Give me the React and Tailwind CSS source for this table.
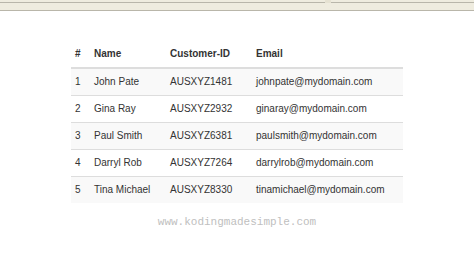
import React from 'react';

const customers = [
  { id: 1, name: 'John Pate', cid: 'AUSXYZ1481', email: 'johnpate@mydomain.com' },
  { id: 2, name: 'Gina Ray', cid: 'AUSXYZ2932', email: 'ginaray@mydomain.com' },
  { id: 3, name: 'Paul Smith', cid: 'AUSXYZ6381', email: 'paulsmith@mydomain.com' },
  { id: 4, name: 'Darryl Rob', cid: 'AUSXYZ7264', email: 'darrylrob@mydomain.com' },
  { id: 5, name: 'Tina Michael', cid: 'AUSXYZ8330', email: 'tinamichael@mydomain.com' },
];

export default function App() {
  return (
    <div className="w-[474px] h-[264px] bg-white font-['Liberation_Sans',Arial,sans-serif] text-[10px] text-[#333]">
      {/* browser chrome strip */}
      <div className="h-[11px] bg-[#efecdf] border-b border-[#b9b6aa] flex items-start">
        <div className="flex-1 h-[3px] border-b border-[#b9b6aa]" />
        <div className="w-[6px] h-[3px] bg-[#e6e2d2]" />
        <div className="w-[143px] h-[3px] border-b border-[#b9b6aa]" />
      </div>

      <div className="pt-[29px] flex justify-center">
        <table className="w-[332px] border-collapse table-fixed">
          <colgroup>
            <col className="w-[18px]" />
            <col className="w-[76px]" />
            <col className="w-[86px]" />
            <col className="w-[152px]" />
          </colgroup>
          <thead>
            <tr className="h-[28px] border-b-2 border-[#dddddd]">
              <th className="px-[4px] text-left font-bold">#</th>
              <th className="px-[5px] text-left font-bold">Name</th>
              <th className="px-[5px] text-left font-bold">Customer-ID</th>
              <th className="px-[5px] text-left font-bold">Email</th>
            </tr>
          </thead>
          <tbody>
            {customers.map((c, i) => (
              <tr
                key={c.id}
                className={`h-[27px] ${i > 0 ? 'border-t border-[#dddddd]' : ''} ${i % 2 === 0 ? 'bg-[#f9f9f9]' : 'bg-white'}`}
              >
                <td className="px-[4px]">{c.id}</td>
                <td className="px-[5px] whitespace-nowrap">{c.name}</td>
                <td className="px-[5px] whitespace-nowrap">{c.cid}</td>
                <td className="px-[5px] whitespace-nowrap">{c.email}</td>
              </tr>
            ))}
          </tbody>
        </table>
      </div>

      <div className="mt-[11px] text-center font-['Liberation_Mono','Courier_New',monospace] text-[11px] text-[#c0c0c0]">
        www.kodingmadesimple.com
      </div>
    </div>
  );
}
